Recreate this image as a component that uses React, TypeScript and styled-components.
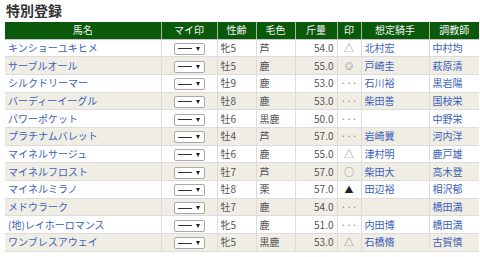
import React from "react";
import styled, { createGlobalStyle } from "styled-components";

const GlobalStyle = createGlobalStyle`
  html, body {
    margin: 0;
    padding: 0;
    background: #fff;
  }
  body {
    font-family: "Noto Sans CJK JP", "Noto Sans", "DejaVu Sans", sans-serif;
    color: #444;
  }
`;

const Page = styled.div`
  padding: 2px 1px 0 5px;
  width: 480px;
  box-sizing: border-box;
`;

const Title = styled.h2`
  margin: 0 0 3px 1px;
  font-size: 14px;
  line-height: 17px;
  font-weight: bold;
  color: #333;
`;

const Table = styled.table`
  border-collapse: collapse;
  width: 474px;
  table-layout: fixed;
  font-size: 10px;
`;

const HeadCell = styled.th<{ w: number }>`
  box-sizing: border-box;
  width: ${(p) => p.w}px;
  height: 17px;
  padding: 0;
  background: #0b590b;
  color: #f4f4f4;
  font-weight: normal;
  line-height: 14px;
  text-align: center;
  border-left: 1px solid #9fbf9f;
  border-bottom: 1px solid #c8c8c8;
  &:first-child {
    border-left: none;
  }
`;

const Row = styled.tr<{ alt: boolean }>`
  background: ${(p) => (p.alt ? "#f0ede5" : "#fff")};
`;

const Cell = styled.td<{ align?: string; tone?: string }>`
  box-sizing: border-box;
  height: 17.7px;
  padding: 0 3px;
  text-align: ${(p) => p.align || "left"};
  color: ${(p) => p.tone || "#555"};
  border-left: 1px solid #dcdcdc;
  border-bottom: 1px solid #dcdcdc;
  white-space: nowrap;
  overflow: hidden;
  line-height: 14px;
  &:first-child {
    border-left: none;
  }
`;

const LinkText = styled.span`
  color: #3a62b8;
`;

const FakeSelect = styled.span`
  display: inline-flex;
  align-items: center;
  gap: 4px;
  box-sizing: border-box;
  width: 31px;
  height: 12px;
  padding: 0 3px;
  margin-top: 2px;
  border: 1px solid #a8a8a8;
  border-radius: 2px;
  background: #fff;
  vertical-align: top;
`;

const Dash = styled.span`
  width: 14px;
  border-top: 1px solid #333;
`;

const Caret = styled.span`
  width: 0;
  height: 0;
  border-left: 2.5px solid transparent;
  border-right: 2.5px solid transparent;
  border-top: 4px solid #222;
`;

const Mark = styled.span<{ kind: string }>`
  font-size: ${(p) => (p.kind === "▲" ? "9px" : p.kind === "◎" ? "8px" : "10px")};
  color: ${(p) => (p.kind === "▲" ? "#222" : p.kind === "◎" ? "#666" : "#8a8a8a")};
  font-weight: ${(p) => (p.kind === "◎" ? "bold" : "normal")};
`;

type Horse = {
  name: string;
  sex: string;
  color: string;
  weight: string;
  mark: string;
  jockey: string;
  trainer: string;
};

const horses: Horse[] = [
  { name: "キンショーユキヒメ", sex: "牝5", color: "芦", weight: "54.0", mark: "△", jockey: "北村宏", trainer: "中村均" },
  { name: "サーブルオール", sex: "牡5", color: "鹿", weight: "55.0", mark: "◎", jockey: "戸崎圭", trainer: "萩原清" },
  { name: "シルクドリーマー", sex: "牡9", color: "鹿", weight: "53.0", mark: "…", jockey: "石川裕", trainer: "黒岩陽" },
  { name: "バーディーイーグル", sex: "牡8", color: "鹿", weight: "53.0", mark: "…", jockey: "柴田善", trainer: "国枝栄" },
  { name: "パワーポケット", sex: "牡6", color: "黒鹿", weight: "50.0", mark: "…", jockey: "", trainer: "中野栄" },
  { name: "プラチナムバレット", sex: "牡4", color: "芦", weight: "57.0", mark: "…", jockey: "岩崎翼", trainer: "河内洋" },
  { name: "マイネルサージュ", sex: "牡6", color: "鹿", weight: "55.0", mark: "△", jockey: "津村明", trainer: "鹿戸雄" },
  { name: "マイネルフロスト", sex: "牡7", color: "芦", weight: "57.0", mark: "○", jockey: "柴田大", trainer: "高木登" },
  { name: "マイネルミラノ", sex: "牡8", color: "栗", weight: "57.0", mark: "▲", jockey: "田辺裕", trainer: "相沢郁" },
  { name: "メドウラーク", sex: "牡7", color: "鹿", weight: "54.0", mark: "…", jockey: "", trainer: "橋田満" },
  { name: "(地)レイホーロマンス", sex: "牝5", color: "鹿", weight: "51.0", mark: "…", jockey: "内田博", trainer: "橋田満" },
  { name: "ワンブレスアウェイ", sex: "牝5", color: "黒鹿", weight: "53.0", mark: "△", jockey: "石橋脩", trainer: "古賀慎" },
];

const columns: [string, number][] = [
  ["馬名", 156],
  ["マイ印", 56],
  ["性齢", 39],
  ["毛色", 39],
  ["斤量", 42],
  ["印", 24],
  ["想定騎手", 68],
  ["調教師", 50],
];

const App: React.FC = () => (
  <Page>
    <GlobalStyle />
    <Title>特別登録</Title>
    <Table>
      <thead>
        <tr>
          {columns.map(([label, w]) => (
            <HeadCell key={label} w={w}>
              {label}
            </HeadCell>
          ))}
        </tr>
      </thead>
      <tbody>
        {horses.map((h, i) => (
          <Row key={h.name} alt={i % 2 === 1}>
            <Cell>
              <LinkText>{h.name}</LinkText>
            </Cell>
            <Cell align="center">
              <FakeSelect>
                <Dash />
                <Caret />
              </FakeSelect>
            </Cell>
            <Cell>{h.sex}</Cell>
            <Cell>{h.color}</Cell>
            <Cell align="right">{h.weight}</Cell>
            <Cell align="center">
              <Mark kind={h.mark}>{h.mark === "…" ? "···" : h.mark}</Mark>
            </Cell>
            <Cell>
              <LinkText>{h.jockey}</LinkText>
            </Cell>
            <Cell>
              <LinkText>{h.trainer}</LinkText>
            </Cell>
          </Row>
        ))}
      </tbody>
    </Table>
  </Page>
);

export default App;
